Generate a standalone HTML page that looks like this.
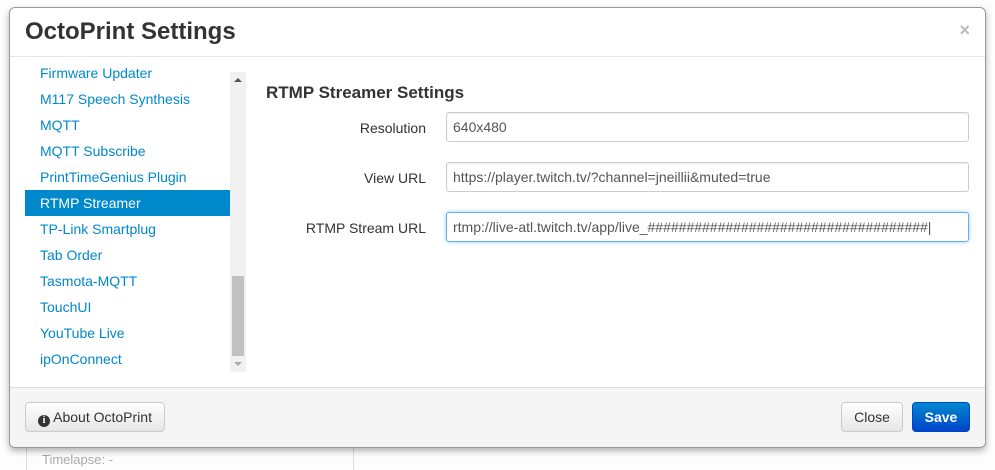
<!DOCTYPE html>
<html><head><style>
body{margin:0;width:995px;height:461px;background:#fdfdfd;font-family:"Liberation Sans",Arial,sans-serif;position:relative;overflow:hidden;font-size:14px;color:#333}
.bg{position:absolute;left:26px;top:440px;width:326px;height:30px;border-left:1px solid #ddd;border-right:1px solid #ddd;}
.bg span{position:absolute;left:15px;top:12px;color:#aaa;font-size:13px}
.modal{position:absolute;left:9px;top:7px;width:975px;height:439px;background:#fff;border:1px solid #999;border-radius:6px;box-shadow:0 3px 7px rgba(0,0,0,.3);overflow:hidden}
.hdr{height:48px;border-bottom:1px solid #e5e5e5;position:relative}
.hdr h3{margin:0;position:absolute;left:15px;top:10px;font-size:24px;font-weight:bold;color:#333}
.x{position:absolute;right:15px;top:12px;color:#bbb;font-size:18px;font-weight:bold}
.list{position:absolute;left:15px;top:57px;width:205px;height:307px;overflow:hidden}
.list div{position:absolute;left:0;width:205px;height:26px;line-height:26px;padding-left:15px;box-sizing:border-box;color:#08c;font-size:14px}
.list div.a{background:#08c;color:#fff}
.sb{position:absolute;left:220px;top:64px;width:16px;height:300px;background:#f1f1f1}
.th{position:absolute;left:2px;top:204px;width:12px;height:80px;background:#c1c1c1}
.form h4{position:absolute;left:256px;top:75px;margin:0;font-size:17px;font-weight:bold}
.lbl{position:absolute;width:200px;left:216px;text-align:right;font-size:14px;color:#333}
.in{position:absolute;left:436px;width:515px;height:28px;border:1px solid #ccc;border-radius:3px;line-height:28px;padding-left:6px;box-sizing:content-box;font-size:14px;color:#555;box-shadow:inset 0 1px 1px rgba(0,0,0,.075)}
.in.f{border-color:#66afe9;box-shadow:0 0 4px rgba(82,168,236,.6)}
.ftr{position:absolute;left:0;top:379px;width:975px;height:60px;background:#f5f5f5;border-top:1px solid #ddd}
.btn{position:absolute;top:14px;height:28px;line-height:28px;border:1px solid #ccc;border-radius:4px;background:linear-gradient(#fff,#e6e6e6);font-size:14px;color:#333;text-align:center;box-sizing:content-box}
.save{background:linear-gradient(#08c,#0044cc);color:#fff;border-color:#04c;font-weight:bold}
.ic{display:inline-block;width:12px;height:12px;border-radius:50%;background:#333;color:#fff;font-size:10px;line-height:12px;font-weight:bold;font-family:"Liberation Serif",serif;vertical-align:-1px}
</style></head><body>
<div class="bg"><span>Timelapse: -</span></div>
<div class="modal">
<div class="hdr"><h3>OctoPrint Settings</h3><span class="x">×</span></div>
<div class="list">
<div style="top:-5px">Firmware Updater</div>
<div style="top:21px">M117 Speech Synthesis</div>
<div style="top:47px">MQTT</div>
<div style="top:73px">MQTT Subscribe</div>
<div style="top:99px">PrintTimeGenius Plugin</div>
<div class="a" style="top:125px">RTMP Streamer</div>
<div style="top:151px">TP-Link Smartplug</div>
<div style="top:177px">Tab Order</div>
<div style="top:203px">Tasmota-MQTT</div>
<div style="top:229px">TouchUI</div>
<div style="top:255px">YouTube Live</div>
<div style="top:281px">ipOnConnect</div>
</div>
<div class="sb"><div style="position:absolute;left:4px;top:6px;border:4px solid transparent;border-bottom:4px solid #555;border-top:0"></div><div class="th"></div><div style="position:absolute;left:4px;top:290px;border:4px solid transparent;border-top:4px solid #aaa;border-bottom:0"></div></div>
<div class="form">
<h4>RTMP Streamer Settings</h4>
<div class="lbl" style="top:112px">Resolution</div>
<div class="in" style="top:104px">640x480</div>
<div class="lbl" style="top:162px">View URL</div>
<div class="in" style="top:154px">https://player.twitch.tv/?channel=jneillii&amp;muted=true</div>
<div class="lbl" style="top:212px">RTMP Stream URL</div>
<div class="in f" style="top:204px">rtmp://live-atl.twitch.tv/app/live_####################################|</div>
</div>
<div class="ftr">
<div class="btn" style="left:15px;width:138px"><span class="ic">i</span> About OctoPrint</div>
<div class="btn" style="left:831px;width:60px">Close</div>
<div class="btn save" style="left:902px;width:56px">Save</div>
</div>
</div>
</body></html>
